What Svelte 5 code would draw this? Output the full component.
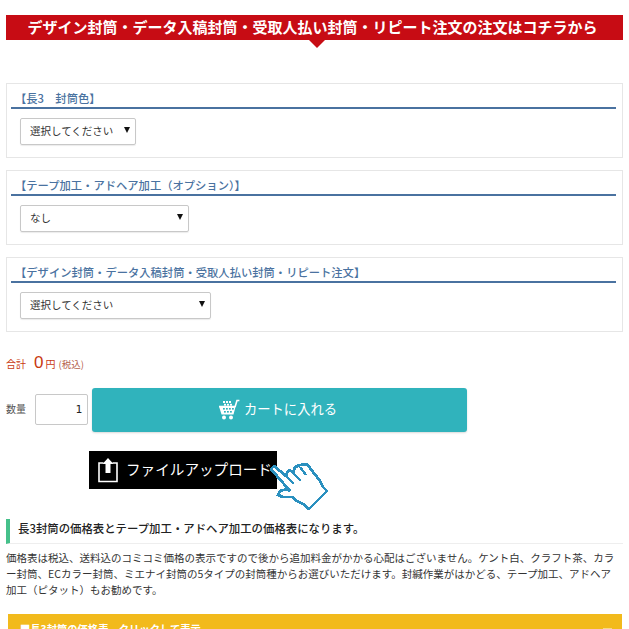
<script>
  const panels = [
    { title: '【長3　封筒色】', value: '選択してください', width: 116 },
    { title: '【テープ加工・アドヘア加工（オプション）】', value: 'なし', width: 169 },
    { title: '【デザイン封筒・データ入稿封筒・受取人払い封筒・リピート注文】', value: '選択してください', width: 191 }
  ];
</script>

<div class="page">
  <div class="banner">
    <span>デザイン封筒・データ入稿封筒・受取人払い封筒・リピート注文の注文はコチラから</span>
    <i class="notch"></i>
  </div>

  <div class="panels">
    {#each panels as p}
      <section class="panel">
        <h3>{p.title}</h3>
        <div class="select" style="width:{p.width}px">
          <span>{p.value}</span>
          <i class="arrow"></i>
        </div>
      </section>
    {/each}
  </div>

  <div class="total">
    <span class="lbl">合計</span>
    <span class="zero">0</span>
    <span class="yen">円</span>
    <span class="tax">(税込)</span>
  </div>

  <div class="buy">
    <span class="qty-label">数量</span>
    <div class="qty">1</div>
    <button class="cart">
      <svg width="22" height="22" viewBox="0 0 22 22">
        <path d="M1 7.5h15l1.2 0L19 1.5h2.4" fill="none" stroke="#fff" stroke-width="1.6"/>
        <path d="M1 7.5h16.6L15.5 15.5H3.5Z" fill="#fff"/>
        <g fill="#30b3bc">
          <rect x="5" y="9" width="1.8" height="1.6"/><rect x="8" y="9" width="1.8" height="1.6"/><rect x="11" y="9" width="1.8" height="1.6"/><rect x="14" y="9" width="1.8" height="1.6"/>
          <rect x="6" y="12" width="1.8" height="1.6"/><rect x="9" y="12" width="1.8" height="1.6"/><rect x="12" y="12" width="1.8" height="1.6"/>
        </g>
        <g fill="#fff">
          <rect x="5" y="2" width="2" height="2"/><rect x="8" y="2" width="2" height="2"/><rect x="11" y="2" width="2" height="2"/>
          <rect x="6" y="4.8" width="2" height="1.8"/><rect x="9" y="4.8" width="2" height="1.8"/><rect x="12" y="4.8" width="2" height="1.8"/>
          <circle cx="6" cy="18.5" r="2"/><circle cx="13" cy="18.5" r="2"/>
        </g>
      </svg>
      <span class="cart-text">カートに入れる</span>
    </button>
  </div>

  <div class="upload-row">
    <div class="upload">
      <svg width="22" height="28" viewBox="0 0 22 28">
        <path d="M6.5 7H2V25.5H20V7H15.5" fill="none" stroke="#fff" stroke-width="1.6"/>
        <path d="M11 2L16.5 8H13.5V17H8.5V8H5.5Z" fill="#fff"/>
      </svg>
      <span class="upload-text">ファイルアップロード</span>
    </div>
    <svg class="hand" width="60" height="48" viewBox="0 0 60 48" shape-rendering="crispEdges">
      <path d="M1 6L4 3L16 13L17 10L20 7L23 10L25 4L30 2L37 1L50 18L53 24L57 28L39 46L33 41L27 38L22 34L13 34L8 32L10 28L17 26L20 28Z" fill="#fff" stroke="#2a90bf" stroke-width="2.8" stroke-linejoin="miter"/>
      <path d="M16 13L24 21M23 10L31 18M30 4L36 12" fill="none" stroke="#2a90bf" stroke-width="2.6"/>
    </svg>
  </div>

  <h2 class="heading">長3封筒の価格表とテープ加工・アドヘア加工の価格表になります。</h2>
  <p class="body">価格表は税込、送料込のコミコミ価格の表示ですので後から追加料金がかかる心配はございません。ケント白、クラフト茶、カラー封筒、ECカラー封筒、ミエナイ封筒の5タイプの封筒種からお選びいただけます。封緘作業がはかどる、テープ加工、アドヘア加工（ピタット）もお勧めです。</p>

  <div class="accordion">■長3封筒の価格表　クリックして表示<i class="toggle"></i></div>
</div>

<style>
  :global(html), :global(body) {
    margin: 0;
    height: 629px;
    overflow: hidden;
    background: #fff;
  }
  .page {
    height: 629px;
    overflow: hidden;
    padding: 15px 6px 0;
    box-sizing: border-box;
    font-family: "Noto Sans CJK JP", "Noto Sans", sans-serif;
    color: #333;
  }
  .banner {
    position: relative;
    width: 617px;
    height: 25px;
    background: #c70c14;
    color: #fff;
    font-weight: 700;
    font-size: 15px;
    line-height: 23px;
    text-align: center;
    white-space: nowrap;
    padding-right: 4px;
    box-sizing: border-box;
  }
  .notch {
    position: absolute;
    left: 303px;
    top: 25px;
    border-left: 8px solid transparent;
    border-right: 8px solid transparent;
    border-top: 8px solid #c70c14;
  }
  .panels {
    margin-top: 43px;
    display: flex;
    flex-direction: column;
    gap: 12px;
  }
  .panel {
    width: 617px;
    height: 75px;
    box-sizing: border-box;
    border: 1px solid #e6e6e6;
    padding: 5px 6px 0 4px;
  }
  h3 {
    margin: 0;
    height: 18px;
    border-bottom: 2px solid #4a72a0;
    padding-left: 4px;
    color: #4a72a0;
    font-size: 11.3px;
    font-weight: 500;
    line-height: 18px;
    white-space: nowrap;
  }
  .select {
    position: relative;
    margin: 9px 0 0 9px;
    height: 27px;
    box-sizing: border-box;
    border: 1px solid #c8c8c8;
    border-radius: 2px;
    box-shadow: 0 1px 1px rgba(0,0,0,.08);
    padding-left: 9px;
    font-size: 10.5px;
    line-height: 24px;
    color: #333;
  }
  .arrow {
    position: absolute;
    right: 5px;
    top: 8px;
    border-left: 3.5px solid transparent;
    border-right: 3.5px solid transparent;
    border-top: 6px solid #111;
  }
  .total {
    margin-top: 21px;
    height: 20px;
    display: flex;
    align-items: baseline;
    color: #c8380f;
    line-height: 20px;
  }
  .lbl { font-size: 10px; width: 28px; }
  .zero { font-size: 17px; font-family: "Liberation Sans", sans-serif; margin-right: 2px; }
  .yen { font-size: 10px; margin-right: 3px; }
  .tax { font-size: 9.5px; color: #b5604a; }
  .buy {
    margin-top: 15px;
    height: 44px;
    display: flex;
    align-items: center;
  }
  .qty-label { font-size: 10px; color: #555; width: 29px; padding-bottom: 3px; }
  .qty {
    width: 53px;
    height: 31px;
    margin-bottom: 1px;
    box-sizing: border-box;
    border: 1px solid #c8c8c8;
    border-radius: 2px;
    text-align: right;
    padding-right: 5px;
    font: 11px/29px "DejaVu Sans Mono", monospace;
    color: #222;
  }
  .cart {
    margin-left: 4px;
    width: 375px;
    height: 44px;
    border: 0;
    border-radius: 3px;
    background: #30b3bc;
    box-shadow: 0 1px 2px rgba(0,0,0,.15);
    color: #fff;
    font: 400 13.3px "Noto Sans CJK JP", sans-serif;
    display: flex;
    align-items: center;
    justify-content: center;
    gap: 4px;
    padding: 0 4px 0 0;
  }
  .cart-text { padding-bottom: 3px; }
  .upload-row {
    position: relative;
    margin: 19px 0 0 83px;
  }
  .upload {
    width: 188px;
    height: 38px;
    background: #000;
    color: #fff;
    display: flex;
    align-items: center;
    font-size: 14.6px;
    white-space: nowrap;
    padding-left: 8px;
    box-sizing: border-box;
    gap: 7px;
  }
  .upload-text { padding-bottom: 3px; }
  .hand {
    position: absolute;
    left: 181px;
    top: 12px;
  }
  .heading {
    margin: 30px 0 0;
    width: 617px;
    height: 25px;
    box-sizing: border-box;
    border-left: 4px solid #45c08a;
    border-bottom: 1px solid #eee;
    padding-left: 8px;
    font-size: 11.4px;
    font-weight: 500;
    line-height: 18px;
    color: #222;
    white-space: nowrap;
  }
  .body {
    margin: 6px 0 0;
    width: 612px;
    font-size: 10.5px;
    line-height: 16px;
    color: #333;
    line-break: anywhere;
  }
  .accordion {
    position: relative;
    margin: 16px 0 0 2px;
    width: 614px;
    height: 40px;
    background: #f2ba1c;
    color: #fff;
    font-size: 10.3px;
    font-weight: 700;
    padding: 7px 0 0 12px;
    box-sizing: border-box;
    white-space: nowrap;
  }
  .toggle {
    position: absolute;
    right: 10px;
    top: 14px;
    width: 9px;
    height: 8px;
    background: rgba(255,255,255,.45);
  }
</style>
